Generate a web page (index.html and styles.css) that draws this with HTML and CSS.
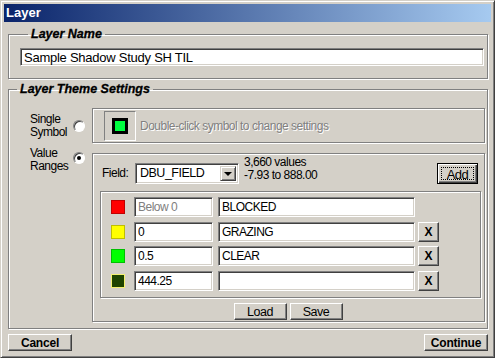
FILE: index.html
```html
<!DOCTYPE html>
<html lang="en">
<head>
  <meta charset="UTF-8" />
  <title>Layer</title>
  <link rel="stylesheet" href="styles.css">
</head>
<body>

  <div class="window">
    <div class="titlebar">Layer</div>

    <div class="content">
      <fieldset class="group name-group">
        <legend>Layer Name</legend>
        <input type="text" class="field name-input" value="Sample Shadow Study SH TIL" />
      </fieldset>

      <fieldset class="group theme-group">
        <legend>Layer Theme Settings</legend>

        <div class="option-row single-row">
          <div class="option-label">Single<br>Symbol</div>
          <span class="radio"></span>
          <div class="panel single-panel">
            <div class="symbol-box"><span class="symbol"></span></div>
            <span class="hint">Double-click symbol to change settings</span>
          </div>
        </div>

        <div class="option-row ranges-row">
          <div class="option-label">Value<br>Ranges</div>
          <span class="radio checked"></span>
          <div class="panel ranges-panel">
            <div class="field-row">
              <span class="field-label">Field:</span>
              <div class="select">
                <span class="select-value">DBU_FIELD</span>
                <span class="select-btn"><span class="arrow"></span></span>
              </div>
              <div class="stats">3,660 values<br>-7.93 to 888.00</div>
              <button class="btn btn-default add-btn"><span class="focus">Add</span></button>
            </div>

            <div class="ranges-box">
              <div class="range-row">
                <span class="swatch" style="background:#f00"></span>
                <input type="text" class="field low muted" value="Below 0" />
                <input type="text" class="field label" value="BLOCKED" />
              </div>
              <div class="range-row">
                <span class="swatch" style="background:#ff0"></span>
                <input type="text" class="field low" value="0" />
                <input type="text" class="field label" value="GRAZING" />
                <button class="btn del-btn">X</button>
              </div>
              <div class="range-row">
                <span class="swatch" style="background:#0f0"></span>
                <input type="text" class="field low" value="0.5" />
                <input type="text" class="field label" value="CLEAR" />
                <button class="btn del-btn">X</button>
              </div>
              <div class="range-row">
                <span class="swatch selected" style="background:#1f4400"></span>
                <input type="text" class="field low" value="444.25" />
                <input type="text" class="field label" value="" />
                <button class="btn del-btn">X</button>
              </div>
            </div>

            <div class="file-row">
              <button class="btn file-btn">Load</button>
              <button class="btn file-btn">Save</button>
            </div>
          </div>
        </div>
      </fieldset>

      <div class="footer">
        <button class="btn footer-btn">Cancel</button>
        <button class="btn footer-btn">Continue</button>
      </div>
    </div>
  </div>

</body>
</html>
```

FILE: styles.css
```css
/* Reset & basics */
* {
  box-sizing: border-box;
}
body {
  margin: 0;
  font-family: 'Liberation Sans', Arial, sans-serif;
  font-size: 12px;
  letter-spacing: -0.5px;
  color: #000;
  background: #d4d0c8;
}

/* Window frame */
.window {
  width: 495px;
  height: 358px;
  padding: 3px;
  background: #d4d0c8;
  border: 1px solid;
  border-color: #d4d0c8 #404040 #404040 #d4d0c8;
  box-shadow: inset 1px 1px #fff, inset -1px -1px #808080;
}
.titlebar {
  height: 18px;
  padding-left: 2px;
  line-height: 18px;
  font-size: 13px;
  font-weight: 700;
  letter-spacing: 0;
  color: #fff;
  background: linear-gradient(90deg, #0a246a, #a6caf0);
}
.content {
  padding: 0 3px 0 4px;
}

/* Group boxes */
.group {
  margin: 0;
  min-width: 0;
  border: 1px solid #808080;
  box-shadow: inset 1px 1px #fff, 1px 1px #fff;
}
.group legend {
  margin-left: 8px;
  padding: 0 3px;
  line-height: 14px;
  font-size: 12.5px;
  font-weight: 700;
  font-style: italic;
  letter-spacing: 0;
  -webkit-text-stroke: 0.3px #000;
}
.name-group {
  margin-top: 5px;
  padding: 7px 3px 12px 11px;
}
.theme-group {
  margin-top: 3px;
  padding: 12px 2px 6px 0;
}

/* Sunken edit fields */
.field {
  display: block;
  height: 20px;
  margin: 0;
  padding: 0 3px;
  font: inherit;
  letter-spacing: inherit;
  color: #000;
  background: #fff;
  border: 1px solid;
  border-color: #808080 #fff #fff #808080;
  box-shadow: inset 1px 1px #404040, inset -1px -1px #d4d0c8;
  outline: none;
}
.name-input {
  width: 100%;
  height: 18px;
  font-size: 13px;
  letter-spacing: -0.25px;
}
.muted {
  color: #808080;
}

/* Option rows */
.option-row {
  display: flex;
}
.option-label {
  width: 65px;
  padding-left: 21px;
  line-height: 13px;
}
.radio {
  flex: none;
  width: 12px;
  height: 12px;
  margin-left: -1px;
  margin-right: 7px;
  border-radius: 50%;
  background: #fff;
  border: 1px solid;
  border-color: #808080 #fff #fff #808080;
  box-shadow: inset 1px 1px #404040;
  display: flex;
  align-items: center;
  justify-content: center;
}
.radio.checked::after {
  content: "";
  width: 4px;
  height: 4px;
  border-radius: 50%;
  background: #000;
}
.panel {
  flex: 1;
  border: 1px solid #808080;
  box-shadow: inset 1px 1px #fff, 1px 1px #fff;
}

/* Single symbol */
.single-row {
  align-items: center;
}
.single-panel {
  height: 35px;
  padding-left: 11px;
  display: flex;
  align-items: center;
  gap: 4px;
}
.symbol-box {
  width: 32px;
  height: 30px;
  border: 1px solid;
  border-color: #808080 #fff #fff #808080;
  display: flex;
  align-items: center;
  justify-content: center;
}
.symbol {
  width: 16px;
  height: 16px;
  border: 3px solid #000;
  background: #00ff40;
}
.hint {
  color: #808080;
  text-shadow: 1px 1px #fff;
}

/* Value ranges */
.ranges-row {
  margin-top: 10px;
  align-items: flex-start;
}
.ranges-row .option-label {
  margin-top: -6px;
}
.ranges-row .radio {
  margin-top: -1px;
}
.ranges-panel {
  height: 169px;
  padding: 9px 6px 0 9px;
}
.field-row {
  display: flex;
  align-items: flex-start;
  height: 21px;
}
.field-label {
  width: 33px;
  line-height: 21px;
}
.select {
  width: 104px;
  height: 21px;
  display: flex;
  background: #fff;
  border: 1px solid;
  border-color: #808080 #fff #fff #808080;
  box-shadow: inset 1px 1px #404040, inset -1px -1px #d4d0c8;
  padding: 2px;
}
.select-value {
  flex: 1;
  padding-left: 2px;
  line-height: 15px;
  font-size: 12.5px;
}
.select-btn {
  width: 16px;
  background: #d4d0c8;
  border: 1px solid;
  border-color: #d4d0c8 #404040 #404040 #d4d0c8;
  box-shadow: inset 1px 1px #fff, inset -1px -1px #808080;
  display: flex;
  align-items: center;
  justify-content: center;
}
.arrow {
  width: 0;
  height: 0;
  border-left: 4px solid transparent;
  border-right: 4px solid transparent;
  border-top: 4px solid #000;
}
.stats {
  margin: -7px 0 0 5px;
  line-height: 13px;
}

/* Buttons */
.btn {
  margin: 0;
  padding: 0;
  font: inherit;
  letter-spacing: inherit;
  color: #000;
  background: #d4d0c8;
  border: 1px solid;
  border-color: #fff #404040 #404040 #fff;
  box-shadow: inset -1px -1px #808080;
}
.btn-default {
  border: 1px solid #000;
  box-shadow: inset 1px 1px #fff, inset -1px -1px #404040, inset -2px -2px #808080;
}
.add-btn {
  width: 41px;
  height: 21px;
  margin-left: auto;
  padding: 3px;
  font-size: 13px;
}
.add-btn .focus {
  display: block;
  height: 100%;
  line-height: 13px;
  border: 1px dotted #000;
}
.ranges-box {
  height: 107px;
  margin: 7px -3px 0 -2px;
  padding: 5px 0 0 10px;
  border: 1px solid #808080;
  box-shadow: inset 1px 1px #fff, 1px 1px #fff;
  display: flex;
  flex-direction: column;
  gap: 4.6px;
}
.range-row {
  display: flex;
  align-items: center;
  height: 20px;
}
.swatch {
  width: 14px;
  height: 14px;
  margin-right: 9px;
  border: 1px solid rgba(0,0,0,0.25);
}
.swatch.selected {
  border-color: #f4f070;
}
.low {
  width: 79px;
}
.label {
  width: 197px;
  margin-left: 5px;
}
.del-btn {
  width: 21px;
  height: 20px;
  margin-left: 3px;
  font-size: 12px;
  font-weight: 700;
  letter-spacing: 0;
}
.file-row {
  display: flex;
  justify-content: center;
  gap: 3px;
  margin-top: 5px;
  padding-right: 4px;
}
.file-btn {
  width: 53px;
  height: 17px;
  font-size: 12.5px;
}

/* Footer */
.footer {
  display: flex;
  justify-content: space-between;
  margin-top: 5px;
}
.footer-btn {
  width: 64px;
  height: 17px;
  font-weight: 700;
  letter-spacing: -0.2px;
}
```
